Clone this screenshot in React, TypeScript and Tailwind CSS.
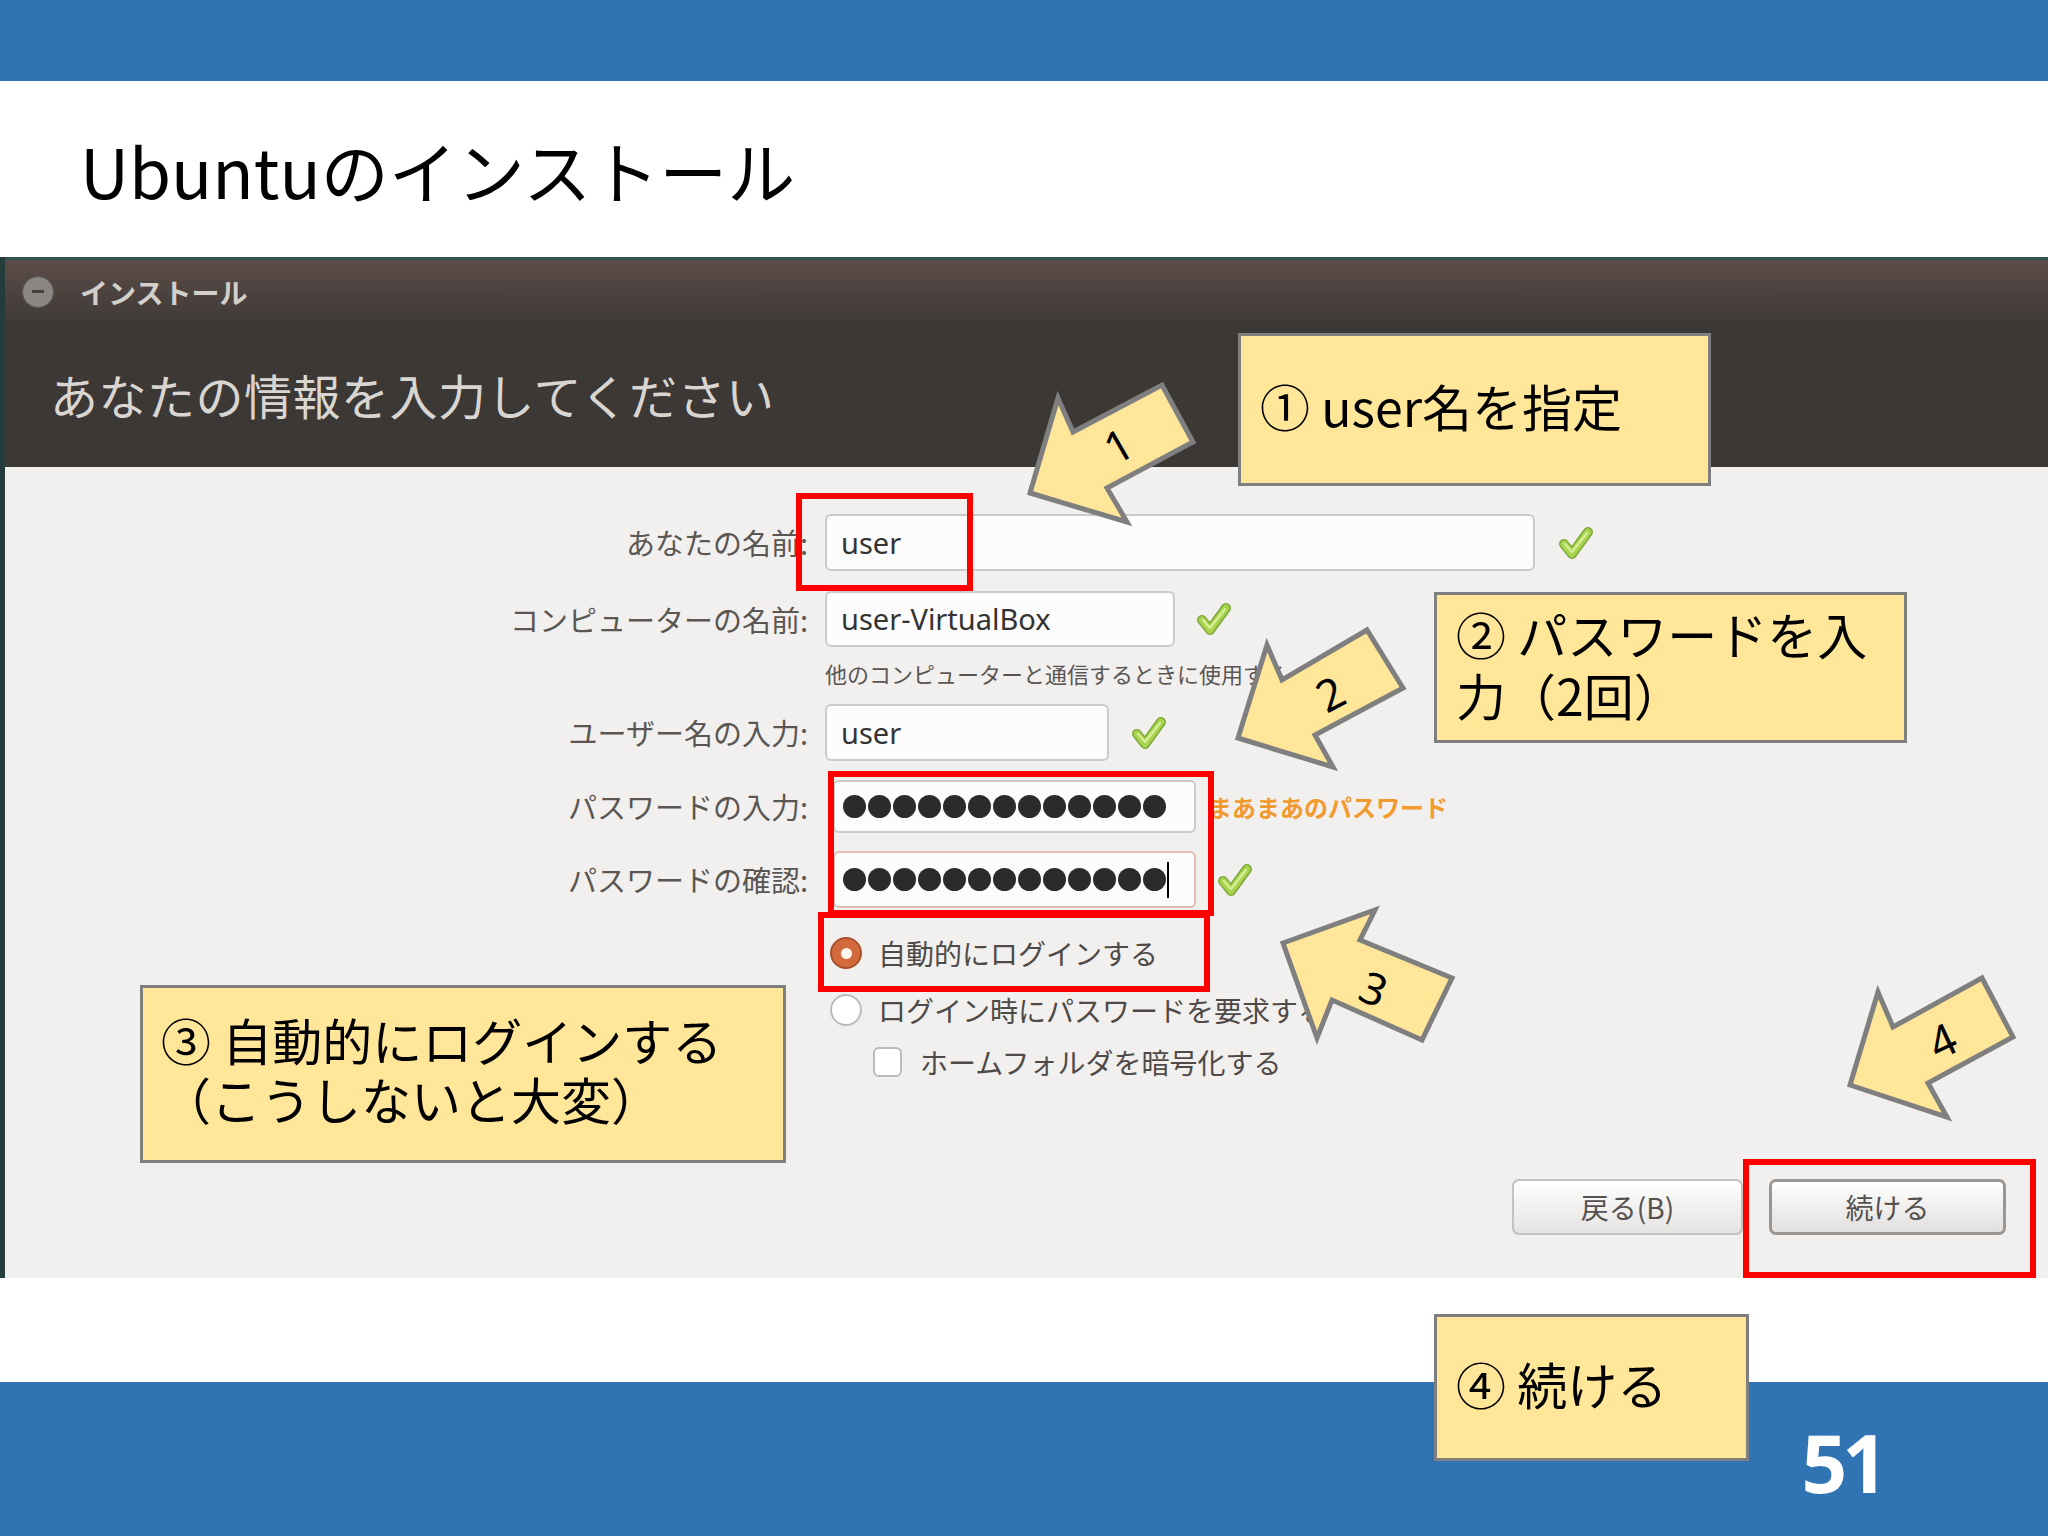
import React from "react";

const JP = "font-['Noto_Sans_CJK_JP','Noto_Sans',sans-serif]";

function Check() {
  return (
    <svg width="38" height="38" viewBox="0 0 38 38" className="shrink-0">
      <polyline points="9,20 17,30 33,8" fill="none" stroke="#7fa83a" strokeWidth="10" strokeLinecap="round" strokeLinejoin="round" />
      <polyline points="9,20 17,30 33,8" fill="none" stroke="#a8d34e" strokeWidth="7" strokeLinecap="round" strokeLinejoin="round" />
      <polyline points="10,20 17,28 32,9" fill="none" stroke="#d4ee96" strokeWidth="2.5" strokeLinecap="round" strokeLinejoin="round" />
    </svg>
  );
}

function Label({ children }: { children: React.ReactNode }) {
  return <div className="w-[803px] text-right text-[29px] text-[#5a5653] leading-none">{children}</div>;
}

function Dots() {
  return (
    <div className="flex gap-[2px]">
      {Array.from({ length: 13 }).map((_, i) => (
        <span key={i} className="block w-[23px] h-[23px] rounded-full bg-[#2b2b2b]" />
      ))}
    </div>
  );
}

type Pt = [number, number];
const arrows: { pts: Pt[]; label: string; c: Pt; rot: number }[] = [
  { pts: [[1030, 493], [1058, 398], [1073, 432], [1162, 385], [1193, 442], [1107, 488], [1127, 522]], label: "1", c: [1118, 445], rot: -30 },
  { pts: [[1238, 738], [1267, 645], [1282, 680], [1367, 630], [1403, 688], [1315, 735], [1333, 767]], label: "2", c: [1330, 693], rot: -28 },
  { pts: [[1283, 943], [1375, 910], [1360, 940], [1452, 978], [1422, 1040], [1332, 1000], [1317, 1038]], label: "3", c: [1374, 988], rot: 22 },
  { pts: [[1850, 1085], [1878, 992], [1893, 1027], [1982, 978], [2013, 1037], [1928, 1083], [1947, 1117]], label: "4", c: [1942, 1040], rot: -25 },
];

export default function App() {
  return (
    <div className={`relative w-[2048px] h-[1536px] bg-white overflow-hidden ${JP}`}>
      {/* top bar */}
      <div className="h-[81px] bg-[#3074b4]" />
      {/* title */}
      <div className="h-[176px] flex items-center pl-[80px] pt-[2px]">
        <h1 className="text-[68px] leading-none text-black font-normal">Ubuntuのインストール</h1>
      </div>

      {/* screenshot */}
      <div className="h-[1021px] flex flex-col border-l-[5px] border-[#243d3b]">
        <div className="h-[63px] flex items-center pl-[17px] pt-[3px] border-t-[3px] border-[#2f5552] bg-gradient-to-b from-[#5c4c48] to-[#403b38]">
          <div className="w-[32px] h-[32px] rounded-full bg-[#8a8683] border border-[#5b5754] flex items-center justify-center">
            <div className="w-[12px] h-[3px] bg-[#45403d]" />
          </div>
          <div className="ml-[26px] text-[28px] font-bold text-[#d3cfcb] leading-none">インストール</div>
        </div>
        <div className="h-[147px] bg-[#3c3836] flex items-center pl-[45px]">
          <div className="text-[48px] leading-none text-[#d9d5d1] tracking-[0.5px]">あなたの情報を入力してください</div>
        </div>
        <div className="flex-1 bg-[#f2f0ef] flex flex-col pt-[47px]">
          <div className="flex items-center h-[57px]">
            <Label>あなたの名前:</Label>
            <div className="ml-[17px] w-[710px] h-[57px] rounded-[6px] border-2 border-[#cdcac7] bg-[#fcfcfc] flex items-center px-[14px] text-[29px] text-[#333] font-['Noto_Sans',sans-serif]">user</div>
            <div className="ml-[20px]"><Check /></div>
          </div>
          <div className="flex items-center h-[56px] mt-[20px]">
            <Label>コンピューターの名前:</Label>
            <div className="ml-[17px] w-[350px] h-[56px] rounded-[6px] border-2 border-[#cdcac7] bg-[#fcfcfc] flex items-center px-[14px] text-[29px] text-[#333] font-['Noto_Sans',sans-serif]">user-VirtualBox</div>
            <div className="ml-[18px]"><Check /></div>
          </div>
          <div className="mt-[13px] pl-[820px] text-[22px] leading-[26px] text-[#5a5653]">他のコンピューターと通信するときに使用する</div>
          <div className="flex items-center h-[57px] mt-[18px]">
            <Label>ユーザー名の入力:</Label>
            <div className="ml-[17px] w-[284px] h-[57px] rounded-[6px] border-2 border-[#cdcac7] bg-[#fcfcfc] flex items-center px-[14px] text-[29px] text-[#333] font-['Noto_Sans',sans-serif]">user</div>
            <div className="ml-[19px]"><Check /></div>
          </div>
          <div className="flex items-center h-[53px] mt-[19px]">
            <Label>パスワードの入力:</Label>
            <div className="ml-[25px] w-[363px] h-[53px] rounded-[6px] border-2 border-[#cdcac7] bg-[#fcfcfc] flex items-center px-[8px]">
              <Dots />
            </div>
            <div className="ml-[12px] text-[24px] font-bold text-[#f29a2e] leading-none">まあまあのパスワード</div>
          </div>
          <div className="flex items-center h-[57px] mt-[18px]">
            <Label>パスワードの確認:</Label>
            <div className="ml-[25px] w-[363px] h-[57px] rounded-[6px] border-2 border-[#e2bcae] bg-[#fcfcfc] flex items-center px-[8px]">
              <Dots />
              <span className="block w-[2px] h-[36px] bg-black ml-[1px]" />
            </div>
            <div className="ml-[18px]"><Check /></div>
          </div>
          <div className="flex items-center h-[36px] mt-[27px] pl-[825px]">
            <span className="w-[32px] h-[32px] rounded-full bg-[#d26a3e] border-2 border-[#a8502c] flex items-center justify-center">
              <span className="w-[11px] h-[11px] rounded-full bg-[#fff6ef]" />
            </span>
            <span className="ml-[16px] text-[28px] text-[#4e4a48] leading-none">自動的にログインする</span>
          </div>
          <div className="flex items-center h-[36px] mt-[21px] pl-[825px]">
            <span className="w-[32px] h-[32px] rounded-full bg-white border-2 border-[#bdbab7]" />
            <span className="ml-[16px] text-[28px] text-[#4e4a48] leading-none">ログイン時にパスワードを要求する</span>
          </div>
          <div className="flex items-center h-[36px] mt-[16px] pl-[868px]">
            <span className="w-[29px] h-[30px] rounded-[6px] bg-white border-2 border-[#bdbab7]" />
            <span className="ml-[18px] text-[28px] text-[#4e4a48] leading-none">ホームフォルダを暗号化する</span>
          </div>
          <div className="flex justify-end gap-[26px] pr-[42px] mt-[99px]">
            <div className="w-[231px] h-[56px] rounded-[7px] border-2 border-[#c4c1be] bg-gradient-to-b from-[#ffffff] to-[#e6e4e2] flex items-center justify-center text-[28px] text-[#555150] leading-none">戻る(B)</div>
            <div className="w-[237px] h-[56px] rounded-[7px] border-[3px] border-[#9a9693] bg-gradient-to-b from-[#ffffff] to-[#e2e0de] flex items-center justify-center text-[28px] text-[#555150] leading-none">続ける</div>
          </div>
        </div>
      </div>

      <div className="h-[104px]" />
      <div className="h-[154px] bg-[#3074b4] flex justify-end items-start pr-[165px] pt-[40px]">
        <span className="text-[80px] font-bold text-white leading-none tracking-[-5px] font-['Noto_Sans',sans-serif]">51</span>
      </div>

      {/* red highlight boxes */}
      <div className="absolute left-[796px] top-[493px] w-[177px] h-[98px] border-[6px] border-[#ff0000]" />
      <div className="absolute left-[828px] top-[771px] w-[386px] h-[145px] border-[6px] border-[#ff0000]" />
      <div className="absolute left-[818px] top-[912px] w-[392px] h-[80px] border-[6px] border-[#ff0000]" />
      <div className="absolute left-[1743px] top-[1159px] w-[293px] h-[119px] border-[6px] border-[#ff0000]" />

      {/* arrows */}
      <svg className="absolute inset-0 pointer-events-none" width="2048" height="1536" viewBox="0 0 2048 1536">
        {arrows.map((a) => (
          <g key={a.label}>
            <polygon points={a.pts.map((p) => p.join(",")).join(" ")} fill="#ffe699" stroke="#7f7f7f" strokeWidth="5" strokeLinejoin="miter" />
            <text
              x={a.c[0]}
              y={a.c[1]}
              textAnchor="middle"
              dominantBaseline="central"
              fontSize="44"
              fontFamily="'Noto Sans', sans-serif"
              fill="#000"
              transform={`rotate(${a.rot} ${a.c[0]} ${a.c[1]})`}
            >
              {a.label}
            </text>
          </g>
        ))}
      </svg>

      {/* callouts */}
      <div className="absolute left-[1238px] top-[333px] w-[473px] h-[153px] bg-[#ffe699] border-[3px] border-[#7f7f7f] flex items-center pl-[19px] pb-[8px] text-[50px] leading-[61px] text-black">
        ① user名を指定
      </div>
      <div className="absolute left-[1434px] top-[592px] w-[473px] h-[151px] bg-[#ffe699] border-[3px] border-[#7f7f7f] flex items-center pl-[19px] pr-[16px] pb-[8px] text-[50px] leading-[61px] text-black">
        <div>② パスワードを入力（2回）</div>
      </div>
      <div className="absolute left-[140px] top-[985px] w-[646px] h-[178px] bg-[#ffe699] border-[3px] border-[#7f7f7f] flex items-center pl-[18px] pb-[10px] text-[50px] leading-[59px] text-black">
        <div className="w-[585px]">③ 自動的にログインする（こうしないと大変）</div>
      </div>
      <div className="absolute left-[1434px] top-[1314px] w-[315px] h-[147px] bg-[#ffe699] border-[3px] border-[#7f7f7f] flex items-center pl-[19px] pb-[8px] text-[50px] leading-[61px] text-black">
        ④ 続ける
      </div>
    </div>
  );
}
